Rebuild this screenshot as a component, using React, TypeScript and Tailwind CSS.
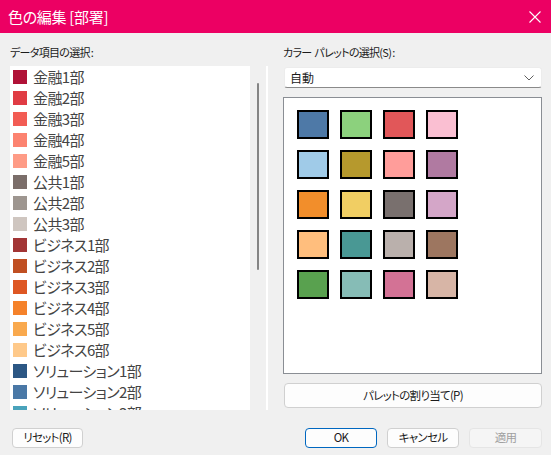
import React from 'react';

const items: [string, string][] = [
  ['金融1部', '#b01237'],
  ['金融2部', '#e03c44'],
  ['金融3部', '#f25c54'],
  ['金融4部', '#fc8370'],
  ['金融5部', '#fe9b86'],
  ['公共1部', '#7b6e6a'],
  ['公共2部', '#9e9690'],
  ['公共3部', '#cfc6c0'],
  ['ビジネス1部', '#a23535'],
  ['ビジネス2部', '#c04f22'],
  ['ビジネス3部', '#de5723'],
  ['ビジネス4部', '#f5822a'],
  ['ビジネス5部', '#f9a94e'],
  ['ビジネス6部', '#fec98a'],
  ['ソリューション1部', '#2c5784'],
  ['ソリューション2部', '#4a78a6'],
  ['ソリューション3部', '#4aa3bb'],
];

// tableau 20, row by row
const palette = [
  '#4e79a7', '#8cd17d', '#e15759', '#fabfd2',
  '#a0cbe8', '#b6992d', '#ff9d9a', '#b07aa1',
  '#f28e2b', '#f1ce63', '#79706e', '#d4a6c8',
  '#ffbe7d', '#499894', '#bab0ac', '#9d7660',
  '#59a14f', '#86bcb6', '#d37295', '#d7b5a6',
];

function Button({ children, className = '' }: { children: React.ReactNode; className?: string }) {
  return (
    <button
      className={`h-[20px] rounded-[4px] border bg-[#fdfdfd] text-[11.5px] tracking-[-0.7px] leading-none text-[#1b1b1b] flex items-center justify-center ${className}`}
    >
      {children}
    </button>
  );
}

export default function App() {
  return (
    <div
      className="w-[551px] h-[455px] bg-[#f0f0f0] flex flex-col overflow-hidden [font-feature-settings:'palt']"
      style={{ fontFamily: '"Noto Sans CJK JP", "Noto Sans", sans-serif' }}
    >
      {/* Title bar */}
      <div className="h-[33px] shrink-0 bg-[#ec0063] flex items-center justify-between pl-[8px] pr-[10px]">
        <span className="text-white text-[15px] leading-none tracking-[-0.3px]">色の編集 [部署]</span>
        <svg width="12" height="12" viewBox="0 0 12 12">
          <path d="M0.5 0.5L11.5 11.5M11.5 0.5L0.5 11.5" stroke="white" strokeWidth="1.1" />
        </svg>
      </div>

      {/* Body */}
      <div className="flex px-[10px] pt-[12px]">
        {/* Left column */}
        <div className="w-[258px] flex flex-col">
          <div className="h-[15px] leading-[15px] text-[11px] tracking-[-0.7px] text-[#1b1b1b] mb-[6px]">
            データ項目の選択<span className="ml-[1px] tracking-normal">:</span>
          </div>
          <div className="h-[344px] flex">
            <div className="w-[240px] bg-white overflow-hidden">
              {items.map(([name, color]) => (
                <div key={name} className="h-[21px] flex items-center pl-[3px] gap-[6px]">
                  <span className="w-[14px] h-[14px] shrink-0" style={{ backgroundColor: color }} />
                  <span className="text-[15px] leading-none tracking-[-0.6px] text-[#444] whitespace-nowrap">{name}</span>
                </div>
              ))}
            </div>
            <div className="w-[16px] bg-[#f0f0f0]">
              <div className="ml-[7px] mt-[17px] w-[2px] h-[187px] bg-[#858585] rounded-full" />
            </div>
            <div className="w-[2px] bg-white" />
          </div>
        </div>

        {/* Right column */}
        <div className="ml-[15px] w-[260px] flex flex-col">
          <div className="h-[15px] leading-[15px] text-[11px] tracking-[-0.7px] text-[#1b1b1b] mb-[7px]">
            カラー<span className="ml-[3px]">パレットの選択(S)</span><span className="ml-[1px] tracking-normal">:</span>
          </div>
          <div className="ml-[1px] w-[258px] h-[21px] bg-white border border-[#ececec] border-b-[#8a8a8a] rounded-[3px] flex items-center justify-between pl-[5px] pr-[7px]">
            <span className="text-[12px] leading-none text-[#1b1b1b]">自動</span>
            <svg width="10" height="6" viewBox="0 0 10 6">
              <path d="M0.5 0.5L5 5L9.5 0.5" stroke="#5f5f5f" strokeWidth="1" fill="none" />
            </svg>
          </div>
          <div className="mt-[9px] h-[277px] bg-white border border-[#8a8e94] pt-[12px] pl-[13px]">
            <div className="grid grid-cols-[repeat(4,32px)] gap-x-[11px] gap-y-[11px]">
              {palette.map((c, i) => (
                <div key={i} className="h-[29px] border-2 border-black" style={{ backgroundColor: c }} />
              ))}
            </div>
          </div>
          <Button className="mt-[9px] ml-[1px] w-[258px] !h-[25px] border-[#d0d0d0]">パレットの割り当て(P)</Button>
        </div>
      </div>

      {/* Footer */}
      <div className="mt-[18px] flex items-center pl-[12px] pr-[9px]">
        <Button className="w-[71px] border-[#d0d0d0]">リセット(R)</Button>
        <div className="flex-1" />
        <div className="flex gap-[10px]">
          <Button className="w-[72px] border-[#0067c0]">OK</Button>
          <Button className="w-[72px] border-[#d0d0d0]">キャンセル</Button>
          <Button className="w-[73px] border-[#e5e5e5] !bg-[#f5f5f5] !text-[#a0a0a0]">適用</Button>
        </div>
      </div>
    </div>
  );
}
